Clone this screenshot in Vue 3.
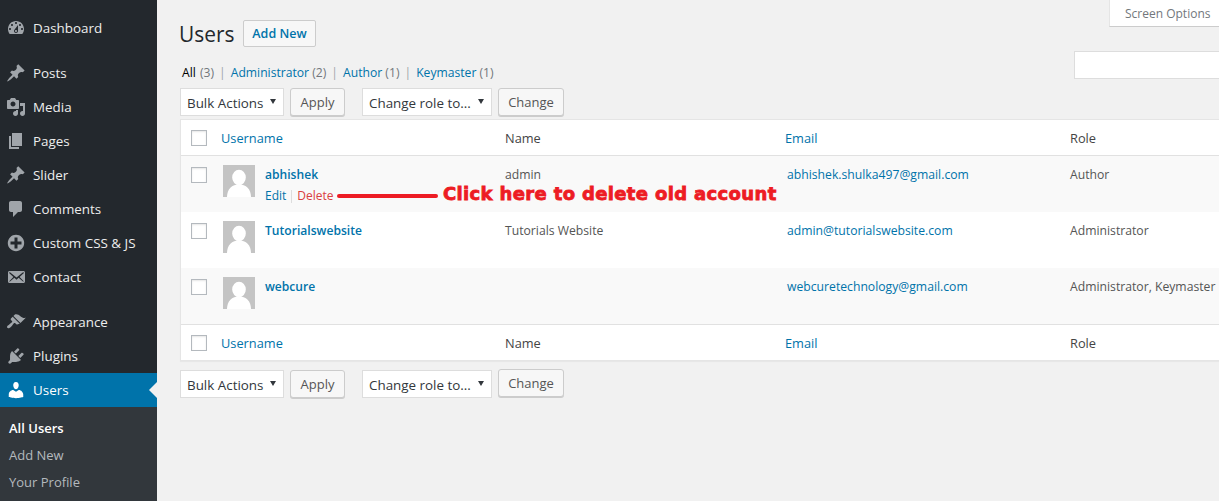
<script setup>
const icons = {
  dashboard: 'M3.76 16h12.48c1.1-1.37 1.76-3.11 1.76-5 0-4.42-3.58-8-8-8s-8 3.58-8 8c0 1.89.66 3.63 1.76 5zM10 4c.55 0 1 .45 1 1s-.45 1-1 1-1-.45-1-1 .45-1 1-1zM6 6c.55 0 1 .45 1 1s-.45 1-1 1-1-.45-1-1 .45-1 1-1zm8 0c.55 0 1 .45 1 1s-.45 1-1 1-1-.45-1-1 .45-1 1-1zm-5.37 5.55L12 7v6c0 1.1-.9 2-2 2s-2-.9-2-2c0-.57.24-1.08.63-1.45zM4 10c.55 0 1 .45 1 1s-.45 1-1 1-1-.45-1-1 .45-1 1-1zm12 0c.55 0 1 .45 1 1s-.45 1-1 1-1-.45-1-1 .45-1 1-1zm-5 3c0-.55-.45-1-1-1s-1 .45-1 1 .45 1 1 1 1-.45 1-1z',
  pin: 'M10.44 3.02l1.82-1.82 6.36 6.35-1.83 1.82c-1.05-.68-2.48-.57-3.41.36l-.75.75c-.92.93-1.04 2.35-.35 3.41l-1.83 1.82-2.41-2.41-2.8 2.79c-.42.42-3.38 2.71-3.8 2.29s1.86-3.39 2.28-3.81l2.79-2.79L4.1 9.36l1.83-1.82c1.05.69 2.48.57 3.4-.36l.75-.75c.93-.92 1.05-2.35.36-3.41z',
  media: 'M13 11V4c0-.55-.45-1-1-1h-1.67L9 1H5L3.67 3H2c-.55 0-1 .45-1 1v7c0 .55.45 1 1 1h10c.55 0 1-.45 1-1zM7 4.5c1.38 0 2.5 1.12 2.5 2.5S8.38 9.5 7 9.5 4.5 8.38 4.5 7 5.62 4.5 7 4.5zM14 6h5v10.5c0 1.38-1.12 2.5-2.5 2.5S14 17.88 14 16.5s1.12-2.5 2.5-2.5c.17 0 .34.02.5.05V9h-3V6zm-4 8.05V13h2v3.5c0 1.38-1.12 2.5-2.5 2.5S7 17.88 7 16.5 8.12 14 9.5 14c.17 0 .34.02.5.05z',
  page: 'M6 15V2h10v13H6zm-1 1h8v2H3V5h2v11z',
  comment: 'M5 2h9c1.1 0 2 .9 2 2v7c0 1.1-.9 2-2 2h-2l-5 5v-5H5c-1.1 0-2-.9-2-2V4c0-1.1.9-2 2-2z',
  plus: 'M15.8 4.2c3.2 3.21 3.2 8.39 0 11.6-3.21 3.2-8.39 3.2-11.6 0C1 12.59 1 7.41 4.2 4.2 7.41 1 12.59 1 15.8 4.2zm-4.3 11.3v-4h4v-3h-4v-4h-3v4h-4v3h4v4h3z',
  email: 'M19 14.5v-9c0-.83-.67-1.5-1.5-1.5H3.49c-.83 0-1.5.67-1.5 1.5v9c0 .83.67 1.5 1.5 1.5H17.5c.83 0 1.5-.67 1.5-1.5zm-1.31-9.11c.33.33.15.67-.03.84L13.6 9.95l3.9 4.06c.12.14.2.36.06.51-.13.16-.43.15-.56.05l-4.37-3.73-2.14 1.95-2.13-1.95-4.37 3.73c-.13.1-.43.11-.56-.05-.14-.15-.06-.37.06-.51l3.9-4.06-4.06-3.72c-.18-.17-.36-.51-.03-.84s.67-.17.95.07l6.24 5.04 6.25-5.04c.28-.24.62-.4.95-.07z',
  brush: 'M14.48 11.06L7.41 3.99l1.5-1.5c.5-.56 2.3-.47 3.51.32 1.21.8 1.43 1.28 2.91 2.1 1.18.64 2.45 1.26 4.45.85zm-.71.71L6.7 4.7 4.93 6.47c-.39.39-.39 1.02 0 1.41l1.06 1.06c.39.39.39 1.03 0 1.42-.6.6-1.43 1.11-2.21 1.69-.35.26-.7.53-1.01.84C1.43 13.23.4 14.89 1.37 15.87c.98.97 2.64-.06 3.98-1.4.31-.31.58-.66.85-1.02.57-.78 1.08-1.61 1.69-2.21.39-.39 1.02-.39 1.41 0l1.06 1.06c.39.39 1.02.39 1.41 0z',
  plug: 'M13.11 4.36L9.87 7.6 8 5.73l3.24-3.24c.35-.34 1.05-.2 1.56.32.52.51.66 1.21.31 1.55zm-8 1.77l.91-1.12 9.01 9.01-1.19.84c-.71.71-2.63 1.16-3.82 1.16H6.14L4.9 17.26c-.59.59-1.54.59-2.12 0-.59-.58-.59-1.53 0-2.12l1.24-1.24v-3.88c0-1.13.4-3.19 1.09-3.89zm7.26 3.97l3.24-3.24c.34-.35 1.04-.21 1.55.31.52.51.66 1.21.31 1.55l-3.24 3.25z',
  users: 'M10 9.25c-2.27 0-2.73-3.44-2.73-3.44C7 4.02 7.82 2 9.97 2c2.16 0 2.98 2.02 2.71 3.81 0 0-.41 3.44-2.68 3.44zm0 2.57L12.72 10c2.39 0 4.52 2.33 4.52 4.53v2.49s-3.65 1.13-7.24 1.13c-3.65 0-7.24-1.13-7.24-1.13v-2.49c0-2.25 1.94-4.48 4.47-4.48z'
}
const menu = [
  [{ label: 'Dashboard', icon: 'dashboard' }],
  [
    { label: 'Posts', icon: 'pin' },
    { label: 'Media', icon: 'media' },
    { label: 'Pages', icon: 'page' },
    { label: 'Slider', icon: 'pin' },
    { label: 'Comments', icon: 'comment' },
    { label: 'Custom CSS & JS', icon: 'plus' },
    { label: 'Contact', icon: 'email' }
  ],
  [
    { label: 'Appearance', icon: 'brush' },
    { label: 'Plugins', icon: 'plug' },
    { label: 'Users', icon: 'users', active: true }
  ]
]
const submenu = ['All Users', 'Add New', 'Your Profile']
const filters = [
  { label: 'Administrator', count: '(2)' },
  { label: 'Author', count: '(1)' },
  { label: 'Keymaster', count: '(1)' }
]
const users = [
  { login: 'abhishek', name: 'admin', email: 'abhishek.shulka497@gmail.com', role: 'Author', actions: true },
  { login: 'Tutorialswebsite', name: 'Tutorials Website', email: 'admin@tutorialswebsite.com', role: 'Administrator' },
  { login: 'webcure', name: '', email: 'webcuretechnology@gmail.com', role: 'Administrator, Keymaster' }
]
</script>

<template>
  <div class="page">
    <aside class="sidebar">
      <nav class="menu">
        <ul v-for="(group, g) in menu" :key="g" class="group">
          <li v-for="item in group" :key="item.label" class="item" :class="{ active: item.active }">
            <svg class="icon" viewBox="0 0 20 20"><path :d="icons[item.icon]" /></svg>
            <span>{{ item.label }}</span>
          </li>
        </ul>
      </nav>
      <ul class="submenu">
        <li v-for="(s, i) in submenu" :key="s" :class="{ current: i === 0 }">{{ s }}</li>
      </ul>
    </aside>

    <main class="main">
      <div class="screen-options">Screen Options</div>

      <header class="heading">
        <h1>Users</h1>
        <a class="add-new">Add New</a>
      </header>

      <div class="filter-row">
        <ul class="filters">
          <li class="all"><b>All</b> <span class="count">(3)</span></li>
          <li v-for="f in filters" :key="f.label">
            <i class="sep">|</i><a>{{ f.label }}</a> <span class="count">{{ f.count }}</span>
          </li>
        </ul>
        <div class="search"></div>
      </div>

      <div class="tablenav">
        <div class="select bulk">Bulk Actions<i class="caret"></i></div>
        <div class="btn apply">Apply</div>
        <div class="select role">Change role to...<i class="caret"></i></div>
        <div class="btn change">Change</div>
      </div>

      <section class="table">
        <div class="row head">
          <div class="check"><span class="box"></span></div>
          <a>Username</a><span>Name</span><a>Email</a><span>Role</span>
        </div>
        <div v-for="u in users" :key="u.login" class="row user">
          <div class="check"><span class="box"></span></div>
          <div class="who">
            <svg class="avatar" viewBox="0 0 32 32">
              <rect width="32" height="32" fill="#c4c4c4" />
              <ellipse cx="16" cy="12.5" rx="6.8" ry="7.8" fill="#fff" />
              <path d="M4 32c0-8 5-12.500 12-12.500S28 24 28 32z" fill="#fff" />
            </svg>
            <div>
              <a class="login">{{ u.login }}</a>
              <div v-if="u.actions" class="actions">
                <a>Edit</a><i class="bar"></i><a class="del">Delete</a>
              </div>
            </div>
          </div>
          <span class="name">{{ u.name }}</span>
          <a class="mail">{{ u.email }}</a>
          <span class="name">{{ u.role }}</span>
        </div>
        <div class="row head foot">
          <div class="check"><span class="box"></span></div>
          <a>Username</a><span>Name</span><a>Email</a><span>Role</span>
        </div>
        <div class="note">
          <i class="note-line"></i>
          <span class="note-text">Click here to delete old account</span>
        </div>
      </section>

      <div class="tablenav bottom">
        <div class="select bulk">Bulk Actions<i class="caret"></i></div>
        <div class="btn apply">Apply</div>
        <div class="select role">Change role to...<i class="caret"></i></div>
        <div class="btn change">Change</div>
      </div>
    </main>
  </div>
</template>

<style>
html, body { margin: 0; background: #f1f1f1; overflow: hidden; }
</style>

<style scoped>
* { box-sizing: border-box; }
ul { list-style: none; margin: 0; padding: 0; }
a { color: #0073aa; }
.page {
  display: flex; width: 1219px; height: 501px; overflow: hidden;
  font-family: "Open Sans", "Liberation Sans", sans-serif;
  font-size: 13px; color: #444; background: #f1f1f1;
}
.sidebar { width: 157px; flex: none; background: #23282d; padding-top: 11px; display: flex; flex-direction: column; }
.group { margin-bottom: 11px; }
.group:last-child { margin-bottom: 0; }
.item { position: relative; display: flex; align-items: center; height: 34px; color: #eee; font-size: 13.400px; }
.item .icon { width: 20px; height: 20px; margin: 0 7px 0 6px; fill: #a0a5aa; flex: none; }
.item.active { background: #0073aa; color: #fff; }
.item.active .icon { fill: #fff; }
.item.active::after {
  content: ""; position: absolute; right: 0; top: 9px;
  border: 8px solid transparent; border-right-color: #f1f1f1; border-left-width: 0;
}
.submenu { flex: 1; background: #32373c; padding-top: 8px; color: #b4b9be; font-size: 13px; }
.submenu li { height: 27px; line-height: 27px; padding-left: 9px; }
.submenu .current { color: #fff; font-weight: 600; }

.main { position: relative; flex: 1; min-width: 0; padding: 20px 0 0 23px; overflow: hidden; }
.screen-options {
  position: absolute; top: 0; right: 0; width: 110px; height: 27px;
  background: #fff; border-left: 1px solid #e5e5e5; border-bottom: 1px solid #ccc;
  color: #72777c; font-size: 12px; line-height: 27px; padding-left: 15px;
}
.heading { display: flex; align-items: center; height: 27px; }
h1 { margin: 0 0 0 -1px; width: 64px; font-size: 20.900px; font-weight: 400; color: #23282d; }
.add-new {
  height: 27px; width: 73px; text-align: center; line-height: 25px; font-size: 12.500px; font-weight: 600;
  background: #f7f7f7; border: 1px solid #ccc; border-radius: 2px;
}
.filter-row { display: flex; align-items: flex-start; height: 37px; margin-top: 4px; }
.filters { display: flex; font-size: 12.150px; color: #72777c; padding-top: 13px; padding-left: 2px; }
.filters .all { word-spacing: 1px; }
.filters b { font-weight: 400; color: #000; }
.sep { font-style: normal; color: #a0a5aa; margin: 0 5px; }
.search { width: 146px; height: 28px; margin-left: auto; background: #fff; border: 1px solid #ddd; margin-right: -1px; }
.tablenav { display: flex; align-items: flex-start; height: 31px; }
.select {
  position: relative; height: 28px; background: #fff; border: 1px solid #ddd;
  line-height: 28px; padding-left: 6px; font-size: 13.400px; color: #32373c;
}
.bulk { width: 104px; }
.role { width: 130px; margin-left: 17px; }
.caret {
  position: absolute; right: 7px; top: 10px;
  border: 3.500px solid transparent; border-top: 5px solid #32373c; border-bottom-width: 0;
}
.btn {
  height: 28px; margin-left: 6px; background: #f7f7f7; border: 1px solid #ccc; border-radius: 3px;
  box-shadow: 0 1px 0 #ccc; color: #555; text-align: center; line-height: 26px; font-size: 13px;
}
.apply { width: 55px; }
.change { width: 66px; }
.bottom { margin-top: 9px; }
.bottom .change { margin-top: -1px; }

.table { position: relative; width: 1062px; background: #fff; border: 1px solid #e5e5e5; border-right: 0; box-shadow: 0 1px 1px rgba(0,0,0,.04); }
.row { display: grid; grid-template-columns: 40px 284px 280px 285px 1fr; }
.head { height: 36px; align-items: center; font-size: 12.800px; border-bottom: 1px solid #e1e1e1; color: #444; }
.foot { border-bottom: 0; border-top: 1px solid #e1e1e1; }
.check { padding-left: 10px; display: flex; }
.box { display: block; width: 16px; height: 16px; background: #fff; border: 1px solid #b4b9be; box-shadow: inset 0 1px 2px rgba(0,0,0,.1); }
.user { height: 56px; padding-top: 9px; }
.user:nth-of-type(even) { background: #f9f9f9; }
.user .check { height: 16px; margin-top: 2px; }
.who { display: flex; gap: 10px; padding-left: 2px; }
.avatar { width: 32px; height: 32px; flex: none; }
.login { font-weight: 600; font-size: 12.100px; display: block; line-height: 18px; margin-top: 1px; }
.actions { display: flex; align-items: center; font-size: 12px; margin-top: 4px; line-height: 16px; }
.actions .bar { width: 1px; height: 13px; background: #ddd; margin: 0 5px; }
.del { color: #d9403f; }
.name { font-size: 12.200px; color: #555; line-height: 18px; margin-top: 1px; }
.mail { font-size: 12.200px; line-height: 18px; padding-left: 2px; margin-top: 1px; }
.note { position: absolute; left: 156px; top: 68px; display: flex; align-items: center; }
.note-line { width: 101px; height: 4px; background: #ed1c24; border-radius: 2px; margin-right: 5px; }
.note-text {
  font-family: "DejaVu Sans", sans-serif; font-weight: 700; font-size: 18px; letter-spacing: .35px; color: #ed1c24;
  -webkit-text-stroke: .8px #ed1c24; white-space: nowrap; line-height: 20px; margin-top: -4px;
}
</style>
